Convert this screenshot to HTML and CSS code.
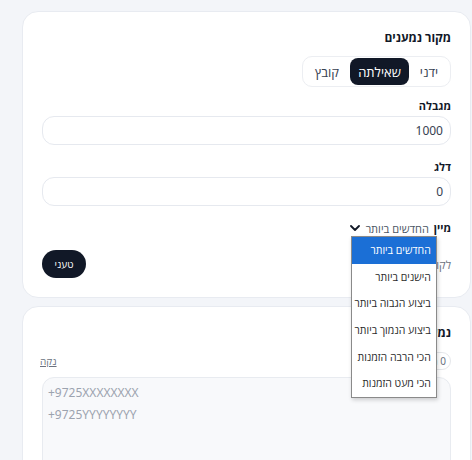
FILE: index.html
```html
<!DOCTYPE html>
<html lang="he" dir="rtl">
<head>
<meta charset="utf-8">
<title>מקור נמענים</title>
<link rel="stylesheet" href="styles.css">
</head>
<body>
<main class="page">
  <section class="card">
    <h2 class="title">מקור נמענים</h2>
    <div class="seg-row">
      <div class="seg">
        <span class="seg-item">ידני</span>
        <span class="seg-item active">שאילתה</span>
        <span class="seg-item">קובץ</span>
      </div>
    </div>
    <label class="label">מגבלה</label>
    <div class="input">1000</div>
    <label class="label gap">דלג</label>
    <div class="input">0</div>
    <div class="sort-row">
      <span class="label inline">מיין</span>
      <div class="select">
        <span class="select-value">החדשים ביותר</span>
        <svg class="chev" width="10" height="6" viewBox="0 0 10 6"><path d="M1 1l4 4 4-4" fill="none" stroke="#111827" stroke-width="1.8" stroke-linecap="round" stroke-linejoin="round"/></svg>
        <ul class="listbox">
          <li class="opt selected">החדשים ביותר</li>
          <li class="opt">הישנים ביותר</li>
          <li class="opt">ביצוע הגבוה ביותר</li>
          <li class="opt">ביצוע הנמוך ביותר</li>
          <li class="opt">הכי הרבה הזמנות</li>
          <li class="opt">הכי מעט הזמנות</li>
        </ul>
      </div>
    </div>
    <div class="action-row">
      <span class="muted">לקוחות שנמצאו: 0</span>
      <button class="btn">טעני</button>
    </div>
  </section>
  <section class="card second">
    <h2 class="title">נמענים</h2>
    <div class="rec-row">
      <span class="pill">0 נמענים</span>
      <a class="clear">נקה</a>
    </div>
    <div class="textarea"><span class="ph">+9725XXXXXXXX<br>+9725YYYYYYYY</span></div>
  </section>
</main>
</body>
</html>
```
FILE: styles.css
```css
* { box-sizing: border-box; }
html, body { margin: 0; padding: 0; }
body {
  background: #f3f5f9;
  font-family: "Noto Sans", "Open Sans", "Liberation Sans", sans-serif;
  color: #111827;
  overflow: hidden;
  height: 460px;
}
.page {
  padding: 11px 1px 0 22px;
  display: flex;
  flex-direction: column;
  gap: 8px;
}
.card {
  background: #fff;
  border: 1px solid #e8ebf1;
  border-radius: 16px;
  padding: 18px 19px 19px 19px;
  display: flex;
  flex-direction: column;
}
.title {
  margin: 0;
  font-size: 12px;
  line-height: 16px;
  font-weight: 700;
  color: #111827;
}
.seg-row { display: flex; margin-top: 10px; }
.seg {
  display: flex;
  align-items: stretch;
  background: #fff;
  border: 1px solid #eceef2;
  border-radius: 10px;
  padding: 1px;
  height: 31px;
}
.seg-item {
  display: flex;
  align-items: center;
  justify-content: center;
  font-size: 13px;
  color: #374151;
  border-radius: 8px;
  padding: 0;
}
.seg-item:first-child { width: 40px; }
.seg-item.active {
  background: #111827;
  color: #fff;
  width: 59px;
}
.seg-item:last-child { width: 46px; }
.label {
  display: block;
  font-size: 11px;
  line-height: 14px;
  font-weight: 700;
  color: #111827;
  margin-top: 12px;
  margin-bottom: 3px;
}
.label.gap { margin-top: 15px; }
.input {
  height: 29px;
  border: 1px solid #e6e9ef;
  border-radius: 12px;
  background: #fff;
  display: flex;
  align-items: center;
  padding: 0 7px;
  font-size: 12px;
  color: #374151;
}
.sort-row {
  display: flex;
  align-items: center;
  gap: 5px;
  margin-top: 14px;
  height: 16px;
}
.label.inline { margin: 0; display: inline; }
.select {
  position: relative;
  display: flex;
  align-items: center;
  justify-content: space-between;
  height: 16px;
  width: 82px;
  padding-left: 3px;
  font-size: 11px;
  color: #4b5563;
  white-space: nowrap;
}
.chev { flex: none; }
.listbox {
  position: absolute;
  top: 16px;
  right: -8px;
  width: 86px;
  margin: 0;
  padding: 0;
  list-style: none;
  background: #fff;
  border: 1px solid #8a8a8a;
  box-shadow: 1px 2px 4px rgba(0,0,0,0.18);
  z-index: 5;
}
.opt {
  height: 26.6px;
  display: flex;
  align-items: center;
  padding: 0 5px;
  font-size: 10.5px;
  color: #2b2b2b;
  white-space: nowrap;
}
.opt.selected { background: #1b6fd6; color: #fff; }
.action-row {
  display: flex;
  align-items: center;
  justify-content: space-between;
  margin-top: 14px;
}
.muted { font-size: 11px; color: #6b7280; }
.btn {
  font-family: inherit;
  background: #111827;
  color: #fff;
  border: 0;
  border-radius: 14px;
  width: 44px;
  height: 28px;
  font-size: 10px;
  padding: 0;
}
.rec-row {
  display: flex;
  align-items: center;
  justify-content: space-between;
  margin-top: 11px;
}
.pill {
  border: 1px solid #e5e7eb;
  border-radius: 999px;
  height: 18px;
  padding: 0 4px;
  font-size: 10px;
  color: #6b7280;
  display: flex;
  align-items: center;
}
.clear {
  font-size: 10px;
  color: #6b7280;
  text-decoration: underline;
  margin-left: -2px;
}
.textarea {
  margin-top: 7px;
  height: 110px;
  background: #f8f9fb;
  border: 1px solid #e8ebf0;
  border-radius: 12px;
  padding: 2px 5px;
  direction: ltr;
  text-align: left;
}
.ph { font-size: 12px; line-height: 18px; color: #9ca3af; }
```
